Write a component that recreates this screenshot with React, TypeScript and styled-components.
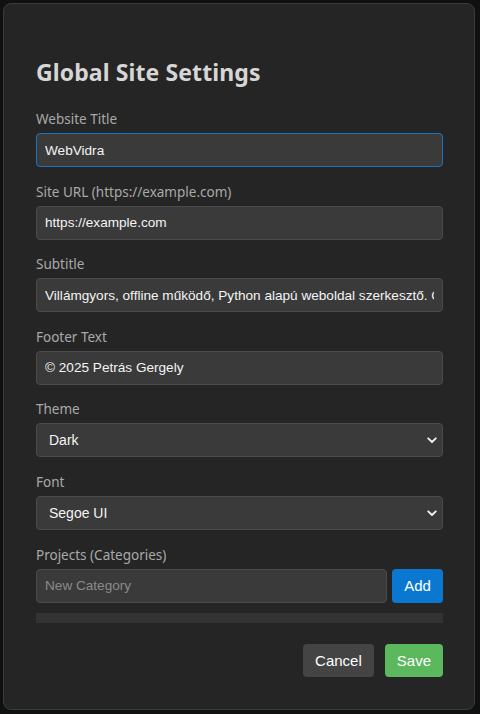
import React from "react";
import styled, { createGlobalStyle } from "styled-components";

const Global = createGlobalStyle`
  html, body { margin: 0; padding: 0; background: #101111; }
  body { width: 480px; height: 714px; overflow: hidden; }
  * { box-sizing: border-box; }
`;

const Backdrop = styled.div`
  width: 480px;
  height: 714px;
  padding: 3px 5px 4px 3px;
  background: #0f1010;
  display: flex;
`;

const Modal = styled.div`
  flex: 1;
  background: #252525;
  border: 1px solid #3a3a3a;
  border-radius: 8px;
  padding: 52px 31px 32px 32px;
  display: flex;
  flex-direction: column;
  font-family: "Noto Sans", "Open Sans", sans-serif;
`;

const Title = styled.h2`
  margin: 0 0 21px;
  font-size: 23px;
  line-height: 32px;
  font-weight: 700;
  color: #d6d6d6;
  letter-spacing: 0.1px;
`;

const Field = styled.div<{ $last?: boolean }>`
  display: flex;
  flex-direction: column;
  margin-bottom: ${(p) => (p.$last ? "0" : "14.6px")};
`;

const Label = styled.label`
  font-size: 13.5px;
  line-height: 20px;
  color: #a9a9a9;
  margin-bottom: 4px;
`;

const Input = styled.input<{ $focus?: boolean }>`
  width: 100%;
  height: 34px;
  padding: 0 8px;
  background: #3a3a3a;
  border: 1px solid ${(p) => (p.$focus ? "#1a73c0" : "#4b4b4b")};
  border-radius: 4px;
  color: #f4f4f4;
  font-family: "Liberation Sans", Arial, sans-serif;
  font-size: 13.6px;
  outline: none;
  &::placeholder { color: #8a8a8a; }
`;

const SelectWrap = styled.div`
  position: relative;
`;

const Select = styled.select`
  width: 100%;
  height: 34px;
  padding: 0 12px;
  appearance: none;
  background: #3a3a3a;
  border: 1px solid #4b4b4b;
  border-radius: 4px;
  color: #f4f4f4;
  font-family: "Liberation Sans", Arial, sans-serif;
  font-size: 14px;
  outline: none;
`;

const Chevron = styled.svg`
  position: absolute;
  right: 6px;
  top: 14px;
  pointer-events: none;
`;

const AddRow = styled.div`
  display: flex;
  gap: 5px;
`;

const AddButton = styled.button`
  flex: 0 0 51px;
  height: 34px;
  border: none;
  border-radius: 4px;
  background: #0a78d1;
  color: #fff;
  font-family: "Liberation Sans", Arial, sans-serif;
  font-size: 15px;
`;

const ListBar = styled.div`
  height: 11px;
  margin-top: 10px;
  background: #333333;
`;

const Footer = styled.div`
  display: flex;
  justify-content: flex-end;
  gap: 11px;
  margin-top: 21px;
`;

const Btn = styled.button<{ $variant: "cancel" | "save" }>`
  height: 33px;
  padding: 0 12px;
  border: none;
  border-radius: 4px;
  background: ${(p) => (p.$variant === "save" ? "#5cb85c" : "#444444")};
  color: #fff;
  font-family: "Liberation Sans", Arial, sans-serif;
  font-size: 15px;
`;

const ChevronIcon = () => (
  <Chevron width="10" height="7" viewBox="0 0 10 7">
    <path d="M1.2 1.3 L5 5 L8.8 1.3" fill="none" stroke="#f2f2f2" strokeWidth="1.8" strokeLinecap="round" strokeLinejoin="round" />
  </Chevron>
);

export default function App() {
  return (
    <>
      <Global />
      <Backdrop>
        <Modal>
          <Title>Global Site Settings</Title>
          <Field>
            <Label>Website Title</Label>
            <Input $focus defaultValue="WebVidra" />
          </Field>
          <Field>
            <Label>Site URL (https://example.com)</Label>
            <Input defaultValue="https://example.com" />
          </Field>
          <Field>
            <Label>Subtitle</Label>
            <Input defaultValue="Villámgyors, offline működő, Python alapú weboldal szerkesztő. Gyors és egyszerű." />
          </Field>
          <Field>
            <Label>Footer Text</Label>
            <Input defaultValue="© 2025 Petrás Gergely" />
          </Field>
          <Field>
            <Label>Theme</Label>
            <SelectWrap>
              <Select defaultValue="dark">
                <option value="dark">Dark</option>
                <option value="light">Light</option>
              </Select>
              <ChevronIcon />
            </SelectWrap>
          </Field>
          <Field>
            <Label>Font</Label>
            <SelectWrap>
              <Select defaultValue="segoe">
                <option value="segoe">Segoe UI</option>
                <option value="arial">Arial</option>
              </Select>
              <ChevronIcon />
            </SelectWrap>
          </Field>
          <Field $last>
            <Label>Projects (Categories)</Label>
            <AddRow>
              <Input placeholder="New Category" />
              <AddButton>Add</AddButton>
            </AddRow>
          </Field>
          <ListBar />
          <Footer>
            <Btn $variant="cancel">Cancel</Btn>
            <Btn $variant="save">Save</Btn>
          </Footer>
        </Modal>
      </Backdrop>
    </>
  );
}
